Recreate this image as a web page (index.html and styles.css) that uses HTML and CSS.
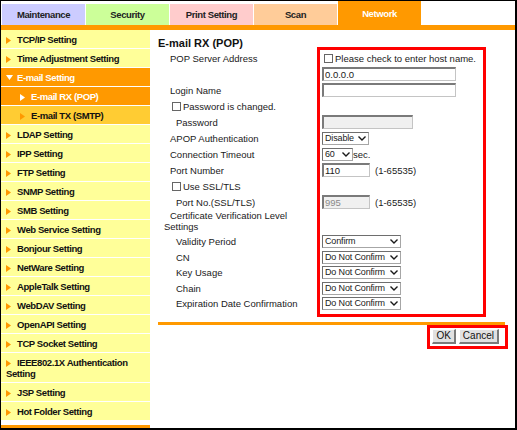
FILE: index.html
```html
<!DOCTYPE html>
<html lang="en">
<head>
    <meta charset="UTF-8">
    <title>E-mail RX (POP)</title>
    <link rel="stylesheet" href="styles.css">
</head>
<body>
    <div class="tabs">
        <div class="tab tab-maintenance">Maintenance</div>
        <div class="tab tab-security">Security</div>
        <div class="tab tab-print">Print Setting</div>
        <div class="tab tab-scan">Scan</div>
        <div class="tab tab-network active">Network</div>
    </div>
    <div class="tab-rule"></div>

    <div class="layout">
        <nav class="menu">
            <a class="menu-item"><svg class="arrow" viewBox="0 0 5 7"><path d="M0 0L5 3.5L0 7z"/></svg>TCP/IP Setting</a>
            <a class="menu-item"><svg class="arrow" viewBox="0 0 5 7"><path d="M0 0L5 3.5L0 7z"/></svg>Time Adjustment Setting</a>
            <a class="menu-item open"><svg class="arrow down" viewBox="0 0 7 5"><path d="M0 0L7 0L3.5 5z"/></svg>E-mail Setting</a>
            <a class="menu-item sub current"><svg class="arrow" viewBox="0 0 5 7"><path d="M0 0L5 3.5L0 7z"/></svg>E-mail RX (POP)</a>
            <a class="menu-item sub sibling"><svg class="arrow" viewBox="0 0 5 7"><path d="M0 0L5 3.5L0 7z"/></svg>E-mail TX (SMTP)</a>
            <a class="menu-item"><svg class="arrow" viewBox="0 0 5 7"><path d="M0 0L5 3.5L0 7z"/></svg>LDAP Setting</a>
            <a class="menu-item"><svg class="arrow" viewBox="0 0 5 7"><path d="M0 0L5 3.5L0 7z"/></svg>IPP Setting</a>
            <a class="menu-item"><svg class="arrow" viewBox="0 0 5 7"><path d="M0 0L5 3.5L0 7z"/></svg>FTP Setting</a>
            <a class="menu-item"><svg class="arrow" viewBox="0 0 5 7"><path d="M0 0L5 3.5L0 7z"/></svg>SNMP Setting</a>
            <a class="menu-item"><svg class="arrow" viewBox="0 0 5 7"><path d="M0 0L5 3.5L0 7z"/></svg>SMB Setting</a>
            <a class="menu-item"><svg class="arrow" viewBox="0 0 5 7"><path d="M0 0L5 3.5L0 7z"/></svg>Web Service Setting</a>
            <a class="menu-item"><svg class="arrow" viewBox="0 0 5 7"><path d="M0 0L5 3.5L0 7z"/></svg>Bonjour Setting</a>
            <a class="menu-item"><svg class="arrow" viewBox="0 0 5 7"><path d="M0 0L5 3.5L0 7z"/></svg>NetWare Setting</a>
            <a class="menu-item"><svg class="arrow" viewBox="0 0 5 7"><path d="M0 0L5 3.5L0 7z"/></svg>AppleTalk Setting</a>
            <a class="menu-item"><svg class="arrow" viewBox="0 0 5 7"><path d="M0 0L5 3.5L0 7z"/></svg>WebDAV Setting</a>
            <a class="menu-item"><svg class="arrow" viewBox="0 0 5 7"><path d="M0 0L5 3.5L0 7z"/></svg>OpenAPI Setting</a>
            <a class="menu-item"><svg class="arrow" viewBox="0 0 5 7"><path d="M0 0L5 3.5L0 7z"/></svg>TCP Socket Setting</a>
            <a class="menu-item"><svg class="arrow" viewBox="0 0 5 7"><path d="M0 0L5 3.5L0 7z"/></svg>IEEE802.1X Authentication Setting</a>
            <a class="menu-item"><svg class="arrow" viewBox="0 0 5 7"><path d="M0 0L5 3.5L0 7z"/></svg>JSP Setting</a>
            <a class="menu-item"><svg class="arrow" viewBox="0 0 5 7"><path d="M0 0L5 3.5L0 7z"/></svg>Hot Folder Setting</a>
        </nav>

        <main class="content">
            <h1 class="page-title">E-mail RX (POP)</h1>

            <form class="form">
                <div class="labels">
                    <div class="row">POP Server Address</div>
                    <div class="row"></div>
                    <div class="row">Login Name</div>
                    <div class="row check-row"><input type="checkbox" class="check">Password is changed.</div>
                    <div class="row sub">Password</div>
                    <div class="row">APOP Authentication</div>
                    <div class="row">Connection Timeout</div>
                    <div class="row">Port Number</div>
                    <div class="row check-row"><input type="checkbox" class="check">Use SSL/TLS</div>
                    <div class="row sub">Port No.(SSL/TLS)</div>
                    <div class="row tall wrap">Certificate Verification Level Settings</div>
                    <div class="row sub">Validity Period</div>
                    <div class="row sub">CN</div>
                    <div class="row sub">Key Usage</div>
                    <div class="row sub">Chain</div>
                    <div class="row sub">Expiration Date Confirmation</div>
                </div>

                <div class="controls">
                    <div class="row"><input type="checkbox" class="check host">Please check to enter host name.</div>
                    <div class="row"><input type="text" class="field w-address" value="0.0.0.0"></div>
                    <div class="row"><input type="text" class="field w-address"></div>
                    <div class="row"></div>
                    <div class="row"><input type="password" class="field w-password" disabled></div>
                    <div class="row">
                        <label class="select w-apop"><select><option>Disable</option></select><svg viewBox="0 0 8 5"><path d="M0.5 0.5L4 4L7.5 0.5"/></svg></label>
                    </div>
                    <div class="row">
                        <label class="select w-timeout"><select><option>60</option></select><svg viewBox="0 0 8 5"><path d="M0.5 0.5L4 4L7.5 0.5"/></svg></label>sec.
                    </div>
                    <div class="row"><input type="text" class="field w-port" value="110"><span class="range">(1-65535)</span></div>
                    <div class="row"></div>
                    <div class="row"><input type="text" class="field w-port" value="995" disabled><span class="range">(1-65535)</span></div>
                    <div class="row tall"></div>
                    <div class="row short">
                        <label class="select w-level"><select><option>Confirm</option></select><svg viewBox="0 0 8 5"><path d="M0.5 0.5L4 4L7.5 0.5"/></svg></label>
                    </div>
                    <div class="row short">
                        <label class="select w-level"><select><option>Do Not Confirm</option></select><svg viewBox="0 0 8 5"><path d="M0.5 0.5L4 4L7.5 0.5"/></svg></label>
                    </div>
                    <div class="row short">
                        <label class="select w-level"><select><option>Do Not Confirm</option></select><svg viewBox="0 0 8 5"><path d="M0.5 0.5L4 4L7.5 0.5"/></svg></label>
                    </div>
                    <div class="row short">
                        <label class="select w-level"><select><option>Do Not Confirm</option></select><svg viewBox="0 0 8 5"><path d="M0.5 0.5L4 4L7.5 0.5"/></svg></label>
                    </div>
                    <div class="row short">
                        <label class="select w-level"><select><option>Do Not Confirm</option></select><svg viewBox="0 0 8 5"><path d="M0.5 0.5L4 4L7.5 0.5"/></svg></label>
                    </div>
                </div>
            </form>

            <div class="content-rule"></div>

            <div class="actions">
                <div class="button-group">
                    <button type="button" class="btn">OK</button>
                    <button type="button" class="btn">Cancel</button>
                </div>
            </div>
        </main>
    </div>
</body>
</html>
```

FILE: styles.css
```css
/* Colours */
:root {
    --orange: #ff9900;
    --gold: #ffcc33;
    --menu-yellow: #ffff99;
    --tab-maintenance: #ccccff;
    --tab-security: #ccff99;
    --tab-print: #ffcccc;
    --tab-scan: #ffcc99;
    --marker-red: #ff0000;
    --text: #1a1a1a;
    --field-border-dark: #7a7a7a;
    --field-border-light: #c4c4c4;
}

* {
    box-sizing: border-box;
    margin: 0;
    padding: 0;
}

html {
    background: #ffffff;
}

body {
    width: 517px;
    height: 430px;
    border-style: solid;
    border-color: #000000;
    border-width: 1px 2px 2px 1px;
    display: flex;
    flex-direction: column;
    font-family: "Liberation Sans", Arial, sans-serif;
    font-size: 9.5px;
    color: var(--text);
    background: #ffffff;
    overflow: hidden;
}

/* Top tabs */
.tabs {
    display: flex;
    align-items: flex-end;
    gap: 1px;
    height: 24px;
    padding-left: 1px;
}

.tab {
    width: 83px;
    height: 21px;
    display: flex;
    align-items: center;
    justify-content: center;
    font-size: 9.5px;
    font-weight: bold;
    letter-spacing: -0.4px;
    color: #222222;
}

.tab-maintenance { background: var(--tab-maintenance); }
.tab-security { background: var(--tab-security); }
.tab-print { background: var(--tab-print); }
.tab-scan { background: var(--tab-scan); }

.tab.active {
    height: 24px;
    background: var(--orange);
    color: #ffffff;
    padding-top: 1px;
}

.tab-rule {
    height: 5px;
    background: var(--orange);
}

.layout {
    flex: 1;
    display: flex;
    min-height: 0;
}

/* Left menu */
.menu {
    width: 149px;
    flex-shrink: 0;
    display: flex;
    flex-direction: column;
    border-bottom: 3px solid var(--orange);
}

.menu-item {
    display: block;
    padding: 4px 4px 3px 5px;
    line-height: 11px;
    background: var(--menu-yellow);
    border-bottom: 1px solid #ffffff;
    font-size: 9.5px;
    font-weight: bold;
    letter-spacing: -0.4px;
    color: #111111;
    text-decoration: none;
}

.menu-item .arrow {
    width: 5px;
    height: 7px;
    margin-right: 6px;
    fill: var(--orange);
    vertical-align: -0.5px;
}

.menu-item .arrow.down {
    width: 7px;
    height: 5px;
    margin-right: 4px;
    vertical-align: 1px;
}

.menu-item.sub {
    padding-left: 19px;
}

.menu-item.open,
.menu-item.current {
    background: var(--orange);
    color: #ffffff;
}

.menu-item.open .arrow,
.menu-item.current .arrow {
    fill: #ffffff;
}

.menu-item.sibling {
    background: var(--gold);
}

/* Main content */
.content {
    flex: 1;
    padding: 7px 10px 0 8px;
}

.page-title {
    font-size: 11px;
    line-height: 12px;
    font-weight: bold;
    color: #111111;
    margin-bottom: -2px;
}

.form {
    display: flex;
    margin-left: 6px;
}

.labels {
    width: 153px;
    padding-top: 3px;
}

.controls {
    width: 169px;
    border: 3px solid var(--marker-red);
    padding-left: 2px;
    padding-bottom: 2px;
}

.row {
    height: 16px;
    display: flex;
    align-items: center;
    white-space: nowrap;
}

.row.short {
    height: 15.5px;
}

.labels .row {
    padding-left: 6px;
}

.labels .row.sub {
    padding-left: 12px;
    height: 15.5px;
}

.labels .row.check-row {
    padding-left: 8px;
}

.row.tall {
    height: 24px;
}

.labels .row.wrap {
    display: block;
    white-space: normal;
    line-height: 11px;
    padding-left: 0;
    text-indent: 6px;
}

.labels .row:nth-child(5),
.labels .row:nth-child(10) {
    height: 16px;
}

.check {
    appearance: none;
    width: 9px;
    height: 9px;
    border: 1px solid #666666;
    background: #ffffff;
    margin-right: 2px;
    flex-shrink: 0;
}

.check.host {
    margin-left: 2px;
}

.field {
    height: 14px;
    padding: 0 1px;
    font-family: inherit;
    font-size: 9.5px;
    color: var(--text);
    background: #ffffff;
    border-style: solid;
    border-width: 2px 1px 1px 2px;
    border-color: var(--field-border-dark) var(--field-border-light) var(--field-border-light) var(--field-border-dark);
    outline: none;
}

.field:disabled {
    background: #f0f0f0;
    color: #8a8a8a;
}

.w-address { width: 134px; }
.w-password { width: 91px; }
.w-port { width: 48px; }

.range {
    margin-left: 5px;
}

.select {
    display: inline-flex;
    align-items: center;
    height: 13px;
    border-style: solid;
    border-width: 1px;
    border-color: #6e6e6e #a6a6a6 #a6a6a6 #6e6e6e;
    background: #ffffff;
}

.select select {
    appearance: none;
    flex: 1;
    min-width: 0;
    height: 11px;
    line-height: 11px;
    border: none;
    background: transparent;
    font-family: inherit;
    font-size: 9px;
    letter-spacing: -0.15px;
    color: var(--text);
    padding: 0 0 0 2px;
    outline: none;
}

.select svg {
    width: 8px;
    height: 5px;
    margin: 0 2px 0 0;
    fill: none;
    stroke: #1a1a1a;
    stroke-width: 1.4;
    flex-shrink: 0;
}

.w-apop { width: 47px; }
.w-timeout { width: 31px; }
.w-level { width: 79px; }

.content-rule {
    height: 3px;
    margin-top: 5px;
    background: var(--orange);
}

.actions {
    display: flex;
    justify-content: flex-end;
    margin-right: -3px;
}

.button-group {
    display: flex;
    gap: 3px;
    border: 3px solid var(--marker-red);
    padding: 1px 6px 2px 2px;
}

.btn {
    height: 15px;
    padding: 0 3px;
    font-family: inherit;
    font-size: 10px;
    color: #111111;
    background: #e1e1e1;
    border-style: solid;
    border-width: 1px 2px 2px 1px;
    border-color: #ffffff #7a7a7a #7a7a7a #ffffff;
}
```
